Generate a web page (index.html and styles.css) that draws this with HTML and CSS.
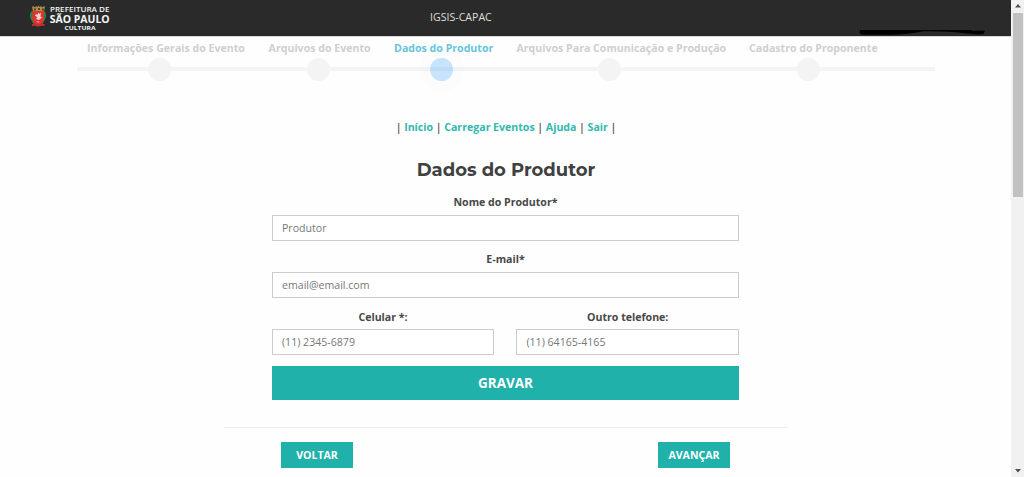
FILE: index.html
```html
<!DOCTYPE html>
<html lang="pt-BR">
<head>
<meta charset="utf-8">
<title>IGSIS-CAPAC</title>
<link rel="stylesheet" href="styles.css">
</head>
<body>
<div class="viewport">
  <div class="page">
    <header class="topbar">
      <svg class="logo" width="84" height="32" viewBox="0 0 84 32" role="img" aria-label="Prefeitura de São Paulo Cultura">
        <g transform="translate(-1 2.500)">
          <path d="M3 2h2l1 1 1-1.400 1.500 1 1-1.600 1 1.600 1.500-1 1 1.400 1-1h2l-1 5H4z" fill="#a8904a"/>
          <path d="M5 4h2v2H5zM9 3.500h2v2H9zM13 4h2v2h-2z" fill="#5d3f28"/>
          <path d="M2 7q-2 4 0 8t3 5l2-3V7zM16 7q2 4 0 8t-3 5l-2-3V7z" fill="#278348"/>
          <path d="M3.500 6.500h11.500V14q0 5-5.800 7Q3.500 19 3.500 14z" fill="#e3332f"/>
          <path d="M6 11q1-2 2.500-.8L9.500 8l1 1.500L12 8l-.6 4 1.600 1-3 2.500-3-1 1.500-1.500z" fill="#f1d8d7"/>
          <path d="M7 16.500l4 .8-2 1z" fill="#e9aaa5"/>
          <path d="M3 19.500q3-1 6 .8 3-1.800 6.500-.8v2q-3-.5-6.500.8-3-1.300-6-.8z" fill="#c92d31"/>
        </g>
        <text class="logo-small" x="20" y="9.700" textLength="59.500" lengthAdjust="spacingAndGlyphs">PREFEITURA DE</text>
        <text class="logo-main" x="19.700" y="20.900" textLength="60" lengthAdjust="spacingAndGlyphs">SÃO PAULO</text>
        <text class="logo-sub" x="34.500" y="27.900" textLength="31" lengthAdjust="spacingAndGlyphs">CULTURA</text>
      </svg>
      <span class="app-name">IGSIS-CAPAC</span>
      <svg class="redaction" width="128" height="6" viewBox="0 0 128 6" aria-hidden="true">
        <path d="M1 0h111l1 .7h13l-1.500 3.300q-8 .8-16-.4-20-2.600-44-2.300-11 3-32 3.400H3Q0 4 1 0z"/>
      </svg>
    </header>

    <nav class="steps">
      <div class="step geral"><span class="step-label">Informações Gerais do Evento</span><i class="dot"></i></div>
      <div class="step arquivos"><span class="step-label">Arquivos do Evento</span><i class="dot"></i></div>
      <div class="step produtor active"><span class="step-label">Dados do Produtor</span><i class="dot"></i></div>
      <div class="step comunicacao"><span class="step-label">Arquivos Para Comunicação e Produção</span><i class="dot"></i></div>
      <div class="step proponente"><span class="step-label">Cadastro do Proponente</span><i class="dot"></i></div>
    </nav>

    <main class="content">
      <div class="menu">| <a>Início</a> | <a>Carregar Eventos</a> | <a>Ajuda</a> | <a>Sair</a> |</div>
      <h1 class="title">Dados do Produtor</h1>
      <form class="form">
        <label class="field"><span class="label">Nome do Produtor*</span><input class="input" placeholder="Produtor"></label>
        <label class="field"><span class="label">E-mail*</span><input class="input" placeholder="email@email.com"></label>
        <div class="pair">
          <label class="field"><span class="label">Celular *:</span><input class="input" placeholder="(11) 2345-6879"></label>
          <label class="field"><span class="label">Outro telefone:</span><input class="input" placeholder="(11) 64165-4165"></label>
        </div>
        <button class="btn save" type="button">GRAVAR</button>
      </form>
      <div class="pager">
        <button class="btn nav-btn" type="button">VOLTAR</button>
        <button class="btn nav-btn" type="button">AVANÇAR</button>
      </div>
    </main>
  </div>
  <aside class="scrollbar">
    <svg class="arrow" width="6" height="4" viewBox="0 0 6 4"><path d="M0 3.500 3 0l3 3.500z"/></svg>
    <div class="thumb"></div>
    <svg class="arrow down" width="6" height="4" viewBox="0 0 6 4"><path d="M0 0h6L3 3.500z"/></svg>
  </aside>
</div>
</body>
</html>
```
FILE: styles.css
```css
* { box-sizing: border-box; }
body {
  margin: 0;
  background: #fefefe;
  color: #484848;
  font-family: "Open Sans", "Noto Sans", sans-serif;
  font-size: 10.600px;
  overflow: hidden;
}
.viewport { display: flex; width: 1024px; height: 477px; }
.page { width: 1011px; height: 477px; }

.topbar {
  display: grid;
  grid-template-columns: 400px 122px 1fr;
  height: 37px;
  padding-left: 30px;
  background: #2a2a2a;
  border-bottom: 1px solid #d8d8d8;
}
.logo { margin-top: 2px; overflow: visible; }
.logo text { fill: #f2f6f7; font-family: "Open Sans", sans-serif; font-weight: 700; }
.logo .logo-small { font-size: 6.800px; font-weight: 600; }
.logo .logo-main { font-size: 10.600px; }
.logo .logo-sub { font-size: 5.600px; }
.app-name { color: #dedede; font-size: 10.600px; line-height: 34px; }
.redaction { align-self: end; justify-self: end; margin-right: 24px; }

.steps {
  display: grid;
  grid-template-columns: 158px 102px 99px 209px 128px;
  column-gap: 23.600px;
  width: 858px;
  height: 63px;
  margin-left: 77px;
  padding: 3px 0 0 10px;
  background: linear-gradient(#f4f4f4, #f4f4f4) 0 30px / 100% 4px no-repeat;
}
.step { display: flex; flex-direction: column; align-items: center; color: #cfcfcf; }
.step-label { height: 17.500px; line-height: 16px; font-weight: 700; white-space: nowrap; }
.dot { width: 23px; height: 23px; border-radius: 50%; background: #f4f4f4; }
.geral .dot { margin-right: 13px; }
.arquivos .dot { margin-right: 2px; }
.produtor .dot { margin-right: 4px; }
.comunicacao .dot { margin-right: 24px; }
.proponente .dot { margin-right: 9px; }
.active { color: #66c5df; }
.active .dot { background: linear-gradient(#c7e4fd 9px, #bddcf5 9px 13px, #c7e4fd 13px); box-shadow: 0 0 0 11px rgba(0, 0, 0, .008); }

.content { width: 564px; margin-left: 224px; }
.menu { padding-top: 19px; height: 54px; line-height: 16px; font-weight: 600; text-align: center; word-spacing: -0.1px; }
.menu a { color: #32b8ae; font-weight: 700; }
.title {
  height: 40px;
  margin: 0;
  font-family: Montserrat, Inter, sans-serif;
  font-size: 18px;
  font-weight: 700;
  line-height: 32px;
  text-align: center;
  color: #404040;
}
.form { width: 467px; margin-left: 48px; }
.field { display: block; height: 57.300px; }
.label { display: block; height: 21px; line-height: 17px; font-weight: 700; text-align: center; }
.input {
  display: block;
  width: 100%;
  height: 26px;
  padding: 0 9px 1px;
  border: 1px solid #ccc;
  background: #fff;
  font: 10.600px "Open Sans", sans-serif;
}
.input::placeholder { color: #777; opacity: 1; }
.pair { display: grid; grid-template-columns: 222px 222.600px; justify-content: space-between; margin-top: -0.400px; margin-bottom: .4px; }
.pair .label { line-height: 18px; }
.btn { display: block; border: 0; padding: 0; background: #20b2aa; color: #fff; font-family: "Open Sans", sans-serif; font-weight: 700; }
.save { width: 100%; height: 34px; font-size: 13.500px; }
.pager {
  display: flex;
  justify-content: space-between;
  margin-top: 27px;
  padding: 14px 58px 0 57px;
  border-top: 1px solid #eee;
}
.nav-btn { width: 72px; height: 26px; font-size: 10.600px; }

.scrollbar { display: flex; flex-direction: column; align-items: center; width: 13px; height: 477px; padding: 4px 0; background: #f1f1f1; }
.arrow { display: block; fill: #505050; flex: none; }
.thumb { width: 10px; height: 184px; margin-top: 5px; background: #c1c1c1; }
.down { margin-top: auto; }
```
